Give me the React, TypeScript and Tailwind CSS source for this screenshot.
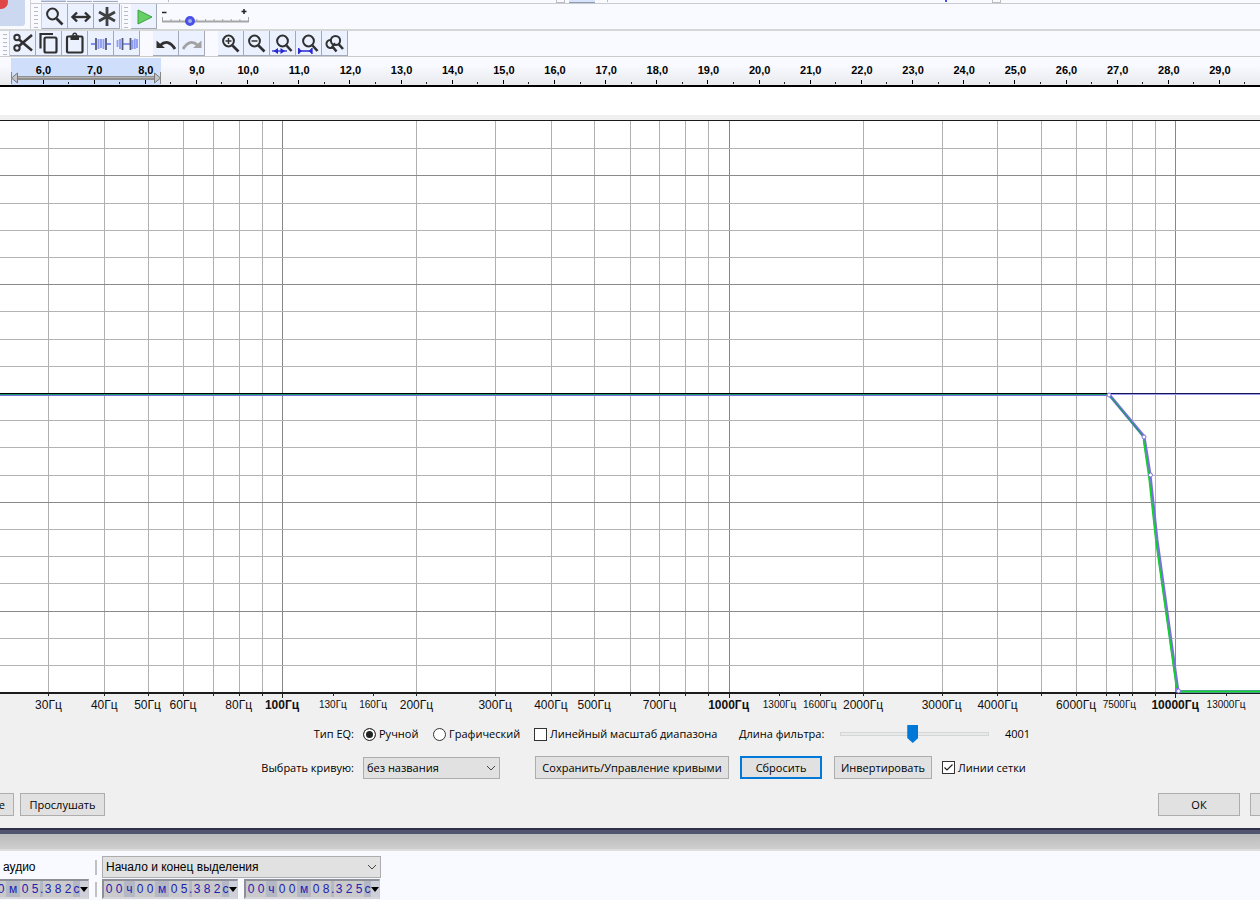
import React from "react";

const RULER_LABELS = Array.from({ length: 24 }, (_, i) => i + 6);
const secX = (s: number) => 43 + (s - 6) * 51.15;
const freqX = (f: number) => 282 + 446.6 * (Math.log10(f) - 2);
const pct = (x: number) => `${(x / 1260) * 100}%`;

const GRID_FREQS = [
  30, 40, 50, 60, 70, 80, 90, 100, 200, 300, 400, 500, 600, 700, 800, 900, 1000, 2000, 3000, 4000, 5000, 6000, 7000,
  8000, 9000, 10000,
];
const TICK_FREQS = [...GRID_FREQS, 130, 160, 1300, 1600, 7500, 13000];
const MAJOR = [100, 1000, 10000];
const SMALL = [130, 160, 1300, 1600, 7500, 13000];
const AXIS_LABELS = [
  30, 40, 50, 60, 80, 100, 130, 160, 200, 300, 400, 500, 700, 1000, 1300, 1600, 2000, 3000, 4000, 6000, 7500, 10000,
  13000,
];
const H_LINES = Array.from({ length: 20 }, (_, i) => i + 1);
const CURVE = "0,274.5 1109,274.5 1144,316.5 1150,354.5 1157,420 1178,571.5 1260,571.5";
const HANDLES = [
  [1109, 275],
  [1144, 317],
  [1150.5, 355],
  [1178.5, 571],
];

function Grip() {
  return (
    <svg width="8" height="22" className="shrink-0" aria-hidden="true">
      {[1, 5, 9, 13, 17, 21].map((y) => (
        <rect key={y} x="2" y={y} width="4" height="1" fill="#b9bbc2" />
      ))}
    </svg>
  );
}

function Tool({ label, children }: { label: string; children: React.ReactNode }) {
  return (
    <button
      type="button"
      aria-label={label}
      className="flex h-[25px] w-[26px] shrink-0 items-center justify-center border-r border-b border-[#a3a9b8] bg-[#ebf1ff]"
    >
      {children}
    </button>
  );
}

function Icon({ children }: { children: React.ReactNode }) {
  return (
    <svg width="22" height="22" viewBox="0 0 22 22" fill="none" stroke="#303030" strokeWidth="2" className="shrink-0">
      {children}
    </svg>
  );
}

function Lens({ children }: { children?: React.ReactNode }) {
  return (
    <Icon>
      <circle cx="8.5" cy="9" r="5.4" />
      <path d="M12.500 13.500 L18.500 19.500" strokeWidth="2.600" />
      {children}
    </Icon>
  );
}

function TopBars() {
  return (
    <header className="bg-[#f8faff]">
      <div className="flex h-[29px]">
        <div className="h-[26px] w-[25px] shrink-0 overflow-hidden rounded-br-[3px] bg-[#ccd8f0]">
          <svg width="25" height="26" aria-hidden="true">
            <circle cx="1" cy="2" r="7" fill="#e04848" />
          </svg>
        </div>
        <div className="ml-[5px] flex min-w-0 flex-1 flex-col border-l border-[#cfd0d4]">
          <div className="flex h-1 shrink-0 border-b border-[#c9cbd0] pl-[10px]">
            <span className="mr-px h-[2px] w-[25px] border-b border-[#a4aabd] bg-[#cdd9f3]" />
            <span className="mr-px h-[2px] w-[25px] border-b border-[#a4aabd] bg-[#ebf1ff]" />
            <span className="h-[2px] w-[25px] border-b border-[#a4aabd] bg-[#ebf1ff]" />
            <span className="ml-[50px] h-[2px] w-px bg-[#b9bbc2]" />
            <span className="ml-[387px] h-[3px] w-[9px] border border-t-0 border-[#bdbdbd]" />
            <span className="ml-1 h-[3px] w-[26px] border-b border-[#8e9bb2] bg-[#d8e4fa]" />
            <span className="ml-3 h-[2px] w-px bg-[#b9bbc2]" />
            <span className="ml-[337px] h-[2px] w-[2px] bg-[#4a4af0]" />
            <span className="ml-[45px] h-[3px] w-[9px] border border-t-0 border-[#bdbdbd]" />
          </div>
          <div className="flex h-[25px] items-center pl-px">
            <Grip />
            <div className="ml-px mr-px flex border-l border-[#cfd0d4]">
              <Tool label="Масштаб">
                <Lens />
              </Tool>
              <Tool label="Сдвиг">
                <Icon>
                  <path d="M3.500 12 H18.500" strokeWidth="2.400" />
                  <path d="M7 7.500 L2.500 12 L7 16.500 M15 7.500 L19.500 12 L15 16.500" strokeWidth="2.400" />
                </Icon>
              </Tool>
              <Tool label="Мультиинструмент">
                <Icon>
                  <path d="M11 2 V21 M3 7 L19 16 M19 7 L3 16" strokeWidth="2.800" stroke="#404040" />
                </Icon>
              </Tool>
            </div>
            <div className="mr-px flex h-6 items-center border-l border-[#cfd0d4]">
              <Grip />
            </div>
            <Tool label="Воспроизвести">
              <Icon>
                <path d="M5 5 L19 12 L5 19 Z" fill="#66d066" stroke="#37a337" strokeWidth="1" />
              </Icon>
            </Tool>
            <div className="relative ml-[5px] h-6 w-[90px]">
              <svg width="90" height="24" aria-hidden="true">
                <path d="M0 7.500 H4.500" stroke="#222" strokeWidth="1.500" />
                <path d="M79.500 6.500 H84.500 M82 4 V9" stroke="#222" strokeWidth="1.500" />
                <path d="M0 16.500 H87" stroke="#a6a6a6" strokeWidth="2" />
                {Array.from({ length: 11 }, (_, i) => (
                  <path key={i} d={`M${0.5 + i * 8.6} ${i % 10 ? 14 : 12} V17`} stroke="#a6a6a6" />
                ))}
              </svg>
              <input
                type="range"
                aria-label="Скорость воспроизведения"
                defaultValue={29}
                className="absolute top-[11px] left-0 h-[10px] w-[90px] appearance-none bg-transparent [&::-webkit-slider-thumb]:h-[10px] [&::-webkit-slider-thumb]:w-[10px] [&::-webkit-slider-thumb]:appearance-none [&::-webkit-slider-thumb]:rounded-full [&::-webkit-slider-thumb]:border-[3px] [&::-webkit-slider-thumb]:border-[#4a50e8] [&::-webkit-slider-thumb]:bg-[#a5b0e8]"
              />
            </div>
          </div>
        </div>
      </div>
      <div className="flex h-7 items-center border-t-2 border-b border-t-[#d5d8d6] border-b-[#cbcccc] pl-px">
        <Grip />
        <div className="flex border-l border-[#cfd0d4]">
          <Tool label="Вырезать">
            <Icon>
              <circle cx="5" cy="5.500" r="2.700" />
              <circle cx="5" cy="16" r="2.700" />
              <path d="M7 7.500 L20 18.500 M7 14 L20 3" strokeWidth="2.600" />
            </Icon>
          </Tool>
          <Tool label="Копировать">
            <Icon>
              <rect x="6.500" y="5.500" width="12" height="15" rx="1.500" strokeWidth="2.200" />
              <path d="M2.500 16.500 V2 H15" strokeWidth="2.200" />
            </Icon>
          </Tool>
          <Tool label="Вставить">
            <Icon>
              <rect x="3" y="4.500" width="15.500" height="16" rx="1" strokeWidth="2.200" />
              <rect x="6.500" y="3.500" width="8.500" height="4.500" fill="#303030" stroke="none" />
              <circle cx="10.750" cy="3" r="1.800" strokeWidth="1.400" />
            </Icon>
          </Tool>
          <Tool label="Обрезать аудио">
            <Icon>
              <path d="M1 12 H5 M17 12 H21" stroke="#7f8ff0" strokeWidth="1.800" />
              <path d="M8.500 7 V17 M11 7 V16 M13.500 7 V17" stroke="#8d9bf5" strokeWidth="1.900" />
              <path d="M6 6 V18 M16 6 V18" stroke="#555b70" strokeWidth="1.800" />
            </Icon>
          </Tool>
          <Tool label="Заглушить аудио">
            <Icon>
              <path d="M1.500 8 V15 M4 7 V17 M16.500 8 V17 M18.800 6.500 V17 M21 7 V16" stroke="#8d9bf5" strokeWidth="1.800" />
              <path d="M7 12 H14" stroke="#7f8ff0" strokeWidth="1.800" />
              <path d="M6.500 6 V18 M14.500 6 V18" stroke="#555b70" strokeWidth="1.800" />
            </Icon>
          </Tool>
        </div>
        <div className="ml-[13px] flex">
          <Tool label="Отменить">
            <Icon>
              <path d="M5 13.500 Q13 6 20 17" strokeWidth="2.800" />
              <path d="M1.500 8.500 V16 H10 Z" fill="#303030" stroke="none" />
            </Icon>
          </Tool>
          <Tool label="Повторить">
            <Icon>
              <path d="M17 13.500 Q9 6 2 17" stroke="#a2a2a2" strokeWidth="2.800" />
              <path d="M20.500 8.500 V16 H12 Z" fill="#a2a2a2" stroke="none" />
            </Icon>
          </Tool>
        </div>
        <div className="ml-[13px] flex">
          <Tool label="Приблизить">
            <Lens>
              <path d="M5.500 9 H11.500 M8.500 6 V12" strokeWidth="1.500" />
            </Lens>
          </Tool>
          <Tool label="Отдалить">
            <Lens>
              <path d="M5.500 9 H11.500" strokeWidth="1.500" />
            </Lens>
          </Tool>
          <Tool label="Выделение по ширине">
            <Icon>
              <circle cx="10.500" cy="9" r="5.400" />
              <path d="M14.500 13.500 L19.500 19" strokeWidth="2.600" />
              <path d="M0 19 H15" stroke="#2a2ad0" strokeWidth="1.300" />
              <path d="M1.500 19 L6 16 V22 Z M13 19 L8.500 16 V22 Z" fill="#2a2ad0" stroke="none" />
            </Icon>
          </Tool>
          <Tool label="Проект по ширине">
            <Icon>
              <circle cx="10.500" cy="9" r="5.400" />
              <path d="M14.500 13.500 L19.500 19" strokeWidth="2.600" />
              <path d="M1 19 H14 M0.700 16 V22 M14 16 V22" stroke="#2a2ad0" strokeWidth="1.300" />
              <path d="M0.500 16 L4 19 L0.500 22 Z M14 16 L10.500 19 L14 22 Z" fill="#2a2ad0" stroke="none" />
            </Icon>
          </Tool>
          <Tool label="Переключить масштаб">
            <Icon>
              <path d="M7 8 A4 4 0 1 0 9.500 14.500" />
              <circle cx="11.500" cy="8.500" r="4.600" />
              <path d="M8 14 L12.500 19.500 M14.500 12 L19 17" strokeWidth="2.600" />
              <path d="M8 14.500 L11 11" strokeWidth="1.500" />
            </Icon>
          </Tool>
        </div>
      </div>
    </header>
  );
}

function Timeline() {
  return (
    <div className="h-[30px] border-b-2 border-black bg-linear-to-b from-[#f9faff] from-30% to-[#e9eaee]">
      <svg
        className="block h-[28px] w-full text-[11px] font-bold"
        fontFamily='"Liberation Sans", Arial, sans-serif'
        role="img"
        aria-label="Шкала времени"
      >
        <rect x={pct(11)} y="1" width={pct(150)} height="27" fill="#cedefb" />
        <rect x="16" y="19" width="142" height="4" fill="#8f8f8f" />
        <rect x="16" y="20" width="142" height="1" fill="#b4b4b4" />
        <path d="M17.500 16 V26 L11.500 21 Z M154.500 16 V26 L160.500 21 Z" fill="#c4c4c4" stroke="#7a7a7a" />
        <path d="M11.500 15 V27 M160.500 15 V27" stroke="#888" />
        {RULER_LABELS.map((s) => (
          <React.Fragment key={s}>
            <text x={pct(secX(s) + 0.5)} y="17" textAnchor="middle" fill="#000">
              {s},0
            </text>
            <rect x={pct(Math.round(secX(s) - 0.5))} y="23" width="1" height="4" fill="#000" />
            <rect x={pct(Math.round(secX(s) + 25))} y="25" width="1" height="2" fill="#222" />
          </React.Fragment>
        ))}
      </svg>
    </div>
  );
}

function Chart() {
  return (
    <svg
      className="block h-[596px] w-full"
      fontFamily='"Liberation Sans", Arial, sans-serif'
      role="img"
      aria-label="Кривая эквалайзера"
      shapeRendering="crispEdges"
    >
      <rect width="100%" height="573" fill="#fff" />
      {GRID_FREQS.map((f) => (
        <rect
          key={f}
          x={pct(Math.round(freqX(f)))}
          y="1"
          width="1"
          height="572"
          fill={MAJOR.includes(f) ? "#878787" : "#b0b0b0"}
        />
      ))}
      {H_LINES.map((i) => (
        <rect
          key={i}
          y={Math.round(1 + i * 27.2)}
          width="100%"
          height="1"
          fill={i % 4 === 2 ? "#8a8a8a" : "#b3b3b3"}
        />
      ))}
      <rect width="100%" height="1" fill="#1a1a1a" />
      <rect x={pct(1110)} y="273" width="12%" height="1" fill="#14145a" />
      <rect x={pct(1110)} y="274" width="12%" height="1" fill="#a09cf0" />
      <rect y="572" width="100%" height="2" fill="#1c1c1c" />
      {TICK_FREQS.map((f) => (
        <rect
          key={f}
          x={pct(Math.round(freqX(f)))}
          y="573"
          width="1"
          height={MAJOR.includes(f) ? 5 : 3}
          fill="#222"
        />
      ))}
      <svg width="100%" height="596" viewBox="0 0 1260 596" preserveAspectRatio="none" shapeRendering="auto">
        <polyline points={CURVE} fill="none" stroke="#7a70e0" strokeWidth="3" />
        <path d="M0 274.500 H1109 L1143.500 317" fill="none" stroke="#1f9a6c" strokeWidth="1.200" />
        <path d="M0 273.500 H1109" stroke="#000" />
        <path d="M1143.500 320 L1149 358 L1156 422 L1176.500 568" fill="none" stroke="#10d428" strokeWidth="1.600" />
        <path d="M1180 571.500 H1260" stroke="#10d830" strokeWidth="2" />
        {HANDLES.map(([x, y]) => (
          <circle key={x} cx={x} cy={y} r="2" fill="#fff" stroke="#7d74e0" />
        ))}
      </svg>
      {AXIS_LABELS.map((f) => (
        <text
          key={f}
          x={pct(freqX(f))}
          y={SMALL.includes(f) ? 588 : 589}
          textAnchor="middle"
          fill="#111"
          fontSize={SMALL.includes(f) ? 10 : 12}
          fontWeight={MAJOR.includes(f) ? 700 : 400}
        >
          {f}Гц
        </text>
      ))}
    </svg>
  );
}

function Chevron() {
  return (
    <svg
      width="10"
      height="6"
      viewBox="0 0 10 6"
      fill="none"
      stroke="#444"
      className="pointer-events-none absolute top-2 right-1"
      aria-hidden="true"
    >
      <path d="M1 1 L5 5 L9 1" />
    </svg>
  );
}

function Check({ on = false, children }: { on?: boolean; children: string }) {
  return (
    <label className="flex items-center gap-[3px]">
      <span className="relative flex h-[13px] w-[13px] shrink-0">
        <input
          type="checkbox"
          defaultChecked={on}
          className="peer h-[13px] w-[13px] appearance-none border border-[#333] bg-white"
        />
        <svg
          viewBox="0 0 13 13"
          fill="none"
          stroke="#222"
          strokeWidth="1.2"
          className="pointer-events-none absolute inset-0 hidden peer-checked:block"
        >
          <path d="M2.500 6.500 L5 9 L10.500 3.500" />
        </svg>
      </span>
      {children}
    </label>
  );
}

const BTN = "h-[23px] shrink-0 border border-[#adadad] bg-[#e1e1e1] text-center whitespace-nowrap";
const RADIO =
  "h-[13px] w-[13px] shrink-0 appearance-none rounded-full border border-[#333] bg-white checked:bg-[#222] checked:shadow-[inset_0_0_0_2px_#fff]";

function Controls() {
  return (
    <section className="bg-[#f0f0f0] pt-[6px] text-[11px] leading-4 text-black">
      <div className="flex h-6 items-center whitespace-nowrap">
        <span className="w-[354px] shrink-0 text-right">Тип EQ:</span>
        <label className="ml-[9px] flex w-[70px] shrink-0 items-center gap-[3px]">
          <input type="radio" name="eq" defaultChecked className={RADIO} />
          Ручной
        </label>
        <label className="flex w-[101px] shrink-0 items-center gap-[3px]">
          <input type="radio" name="eq" className={RADIO} />
          Графический
        </label>
        <div className="w-[205px] shrink-0">
          <Check>Линейный масштаб диапазона</Check>
        </div>
        <label htmlFor="filter-length" className="w-[101px] shrink-0">
          Длина фильтра:
        </label>
        <input
          id="filter-length"
          type="range"
          min="21"
          max="8191"
          defaultValue="4001"
          className="h-5 w-[149px] shrink-0 appearance-none bg-transparent [&::-webkit-slider-runnable-track]:h-1 [&::-webkit-slider-runnable-track]:border [&::-webkit-slider-runnable-track]:border-[#d6d6d6] [&::-webkit-slider-runnable-track]:bg-[#e7eaea] [&::-webkit-slider-thumb]:-mt-[8px] [&::-webkit-slider-thumb]:h-[18px] [&::-webkit-slider-thumb]:w-[11px] [&::-webkit-slider-thumb]:appearance-none [&::-webkit-slider-thumb]:bg-[#0078d7] [&::-webkit-slider-thumb]:[clip-path:polygon(0_0,100%_0,100%_72%,50%_100%,0_72%)]"
        />
        <output htmlFor="filter-length" className="ml-4">
          4001
        </output>
      </div>
      <div className="mt-[10px] flex h-[23px] items-center whitespace-nowrap">
        <label htmlFor="curve" className="w-[354px] shrink-0 text-right">
          Выбрать кривую:
        </label>
        <div className="relative ml-[9px] w-[137px] shrink-0">
          <select id="curve" className="block h-[22px] w-full appearance-none border border-[#adadad] bg-[#e1e1e1] pl-[3px]">
            <option>без названия</option>
          </select>
          <Chevron />
        </div>
        <button type="button" className={`${BTN} ml-[35px] w-[194px]`}>
          Сохранить/Управление кривыми
        </button>
        <button
          type="button"
          className="ml-[11px] h-[23px] w-[82px] shrink-0 border-2 border-[#0078d7] bg-[#e1e1e1] text-center whitespace-nowrap"
        >
          Сбросить
        </button>
        <button type="button" className={`${BTN} ml-3 w-[98px]`}>
          Инвертировать
        </button>
        <div className="ml-[10px]">
          <Check on>Линии сетки</Check>
        </div>
      </div>
      <div className="mt-[14px] flex h-[35px] items-start overflow-hidden">
        <button type="button" className={`${BTN} w-[14px] border-l-0`}>
          <span className="flex justify-end pr-2">е</span>
        </button>
        <button type="button" className={`${BTN} ml-[6px] w-[85px]`}>
          Прослушать
        </button>
        <span className="flex-1" />
        <button type="button" className={`${BTN} w-[82px]`}>
          ОК
        </button>
        <button type="button" aria-label="Отмена" className={`${BTN} ml-[10px] w-[10px] border-r-0`} />
      </div>
    </section>
  );
}

const CELL: Record<string, string> = {
  ".": "w-[3px] shrink-0 text-center",
  ч: "w-[11px] shrink-0 text-center",
  м: "w-[14px] shrink-0 text-center",
  с: "w-[7px] shrink-0 text-center",
};

function TimeField({ value, label }: { value: string; label: string }) {
  return (
    <div
      role="group"
      aria-label={label}
      className="flex h-5 w-[136px] shrink-0 items-center border-2 border-r border-[#8c8f98] border-r-[#c9c9cf] border-b-[#d5d5da] bg-[#b4b8c4] text-[12px] leading-4 text-[#2020b4]"
    >
      {value.split("").map((c, i) => (
        <span key={i} className={CELL[c] ?? "w-[10px] shrink-0 bg-[#cacaca] text-center"}>
          {c}
        </span>
      ))}
      <button type="button" aria-label="Формат" className="flex h-full flex-1 items-center justify-center bg-[#cdd0d8]">
        <svg width="8" height="5" viewBox="0 0 8 5" className="shrink-0">
          <path d="M0 0 H8 L4 5 Z" fill="#000" />
        </svg>
      </button>
    </div>
  );
}

function StatusBar() {
  return (
    <footer className="bg-[#f8faff] pt-[5px] font-['Liberation_Sans',Arial,sans-serif] text-[12px]">
      <div className="flex h-[22px] items-center">
        <span className="w-[95px] shrink-0 pl-[3px]">аудио</span>
        <span className="mr-[5px] h-[15px] w-[2px] shrink-0 bg-[#c0c0c4]" />
        <div className="relative w-[279px] shrink-0">
          <select
            aria-label="Режим выделения"
            className="block h-[22px] w-full appearance-none border border-[#adadad] bg-[#e1e1e1] pl-[3px]"
          >
            <option>Начало и конец выделения</option>
          </select>
          <Chevron />
        </div>
      </div>
      <div className="mt-px flex h-[21px] items-start">
        <div className="flex w-[89px] shrink-0 justify-end overflow-hidden">
          <TimeField value="00ч00м05.382с" label="Положение аудио" />
        </div>
        <span className="mt-[3px] mr-[5px] ml-[6px] h-[15px] w-[2px] shrink-0 bg-[#c0c0c4]" />
        <TimeField value="00ч00м05.382с" label="Начало выделения" />
        <span className="w-[6px] shrink-0" />
        <TimeField value="00ч00м08.325с" label="Конец выделения" />
      </div>
    </footer>
  );
}

export default function App() {
  return (
    <div className="min-h-screen overflow-hidden bg-[#f8faff] font-['Open_Sans','Noto_Sans',sans-serif]">
      <TopBars />
      <Timeline />
      <main>
        <div className="h-7 bg-white" />
        <div className="h-[5px] bg-[#f0f0f0]" />
        <div className="bg-[#f0f0f0]">
          <Chart />
        </div>
        <Controls />
      </main>
      <div className="h-[6px] border-t-2 border-[#30304a] bg-[#53566f]" />
      <div className="h-[17px] border-b-2 border-b-[#dedede] bg-linear-to-b from-[#bcbcbc] to-[#cecece]" />
      <StatusBar />
    </div>
  );
}
